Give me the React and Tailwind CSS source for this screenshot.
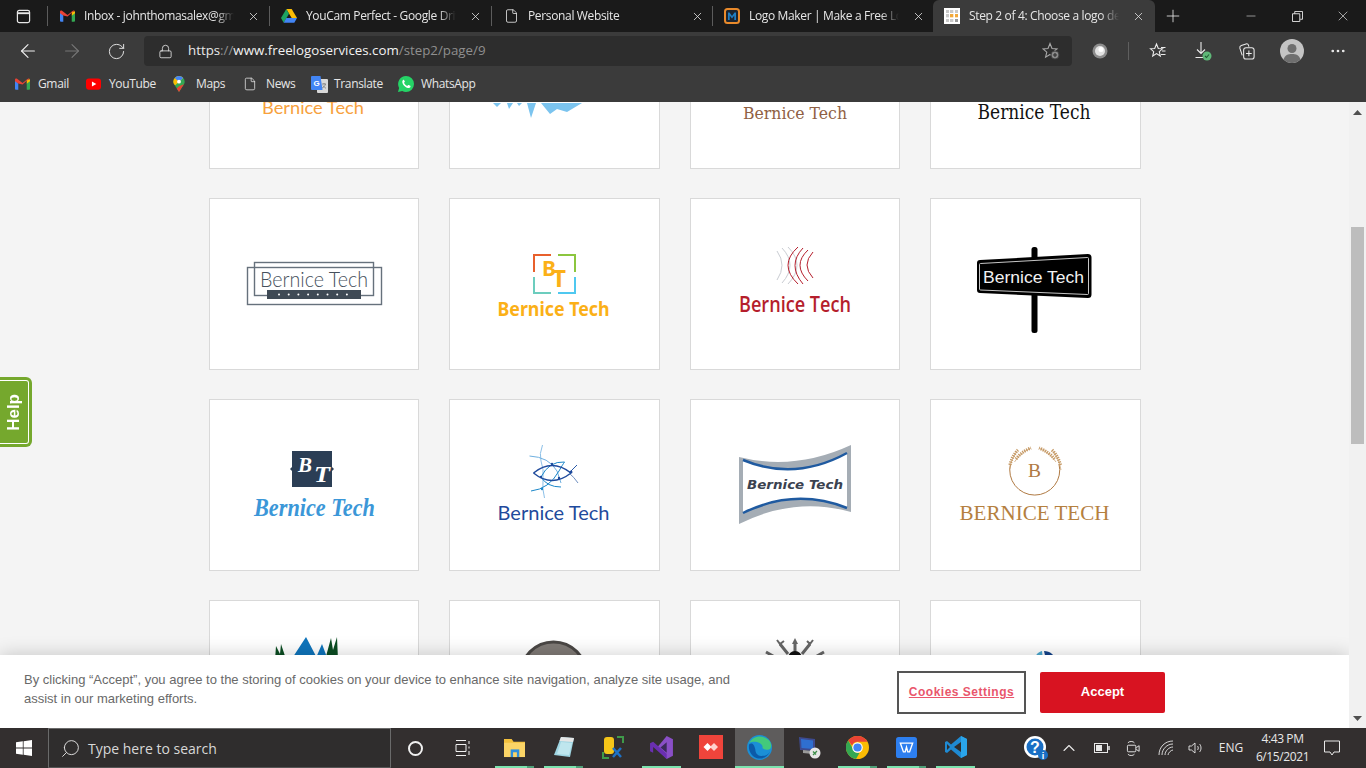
import { ArrowLeft, ArrowRight, RotateCw, Lock, X, Plus, Minus, Search, ChevronUp, MoreHorizontal, File } from 'lucide-react';

const GmailIcon = () => (
  <svg viewBox="0 0 16 12" className="w-[15px] h-[12px]">
    <path d="M0 2v9a1 1 0 0 0 1 1h2.500V5.500z" fill="#4285f4" />
    <path d="M16 2v9a1 1 0 0 1-1 1h-2.500V5.500z" fill="#34a853" />
    <path d="M12.500 1.500 16 .8V3l-3.500 2.600z" fill="#fbbc04" />
    <path d="M3.500 5.500 0 3V1.300C0 .2 1.300-.3 2.200.4L8 4.800 13.800.4c.6-.4 1.200-.4 1.700-.1L12.500 2.600 8 6.500z" fill="#ea4335" />
  </svg>
);

const DriveIcon = () => (
  <svg viewBox="0 0 16 14" className="w-[16px] h-[14px]">
    <path d="M5.300 0h5.400l5.300 9h-5.300z" fill="#fbbc04" />
    <path d="M5.300 0 0 9l2.700 4.800L8 4.700z" fill="#1ea362" />
    <path d="M5.300 9H16l-2.700 4.800H2.700z" fill="#4285f4" />
  </svg>
);

const LogoMakerIcon = () => (
  <svg viewBox="0 0 16 16" className="w-[16px] h-[16px]">
    <rect x="1" y="1" width="14" height="14" rx="2.500" fill="#1b2530" stroke="#e98a2b" strokeWidth="2" />
    <path d="M4 12V4.500h1.500L8 8l2.500-3.500H12V12h-1.700V7.500L8 10.500 5.700 7.500V12z" fill="#1f7fc4" />
  </svg>
);

const GridFavicon = () => {
  const cells = ['#c9c9c9', '#c9c9c9', '#c9c9c9', '#c9c9c9', '#f2a93b', '#f2a93b', '#c9c9c9', '#c9c9c9', '#9a9a9a'];
  return (
    <div className="w-[16px] h-[16px] bg-white grid grid-cols-3 gap-[1px] p-[2px]">
      {cells.map((c, i) => (
        <svg key={i} viewBox="0 0 3 3" className="w-full h-full"><rect width="3" height="3" fill={c} /></svg>
      ))}
    </div>
  );
};

const Tab = ({ icon, title, active, narrow }) => {
  let box = 'w-[221px] h-full flex items-center pl-[11px] shrink-0';
  if (narrow) box = 'w-[220px] h-full flex items-center pl-[11px] shrink-0';
  if (active) box = 'w-[222px] h-full flex items-center pl-[11px] bg-[#3b3b3b] rounded-t-md shrink-0';
  return (
    <div className={box}>
      <div className="w-[16px] h-[16px] flex items-center justify-center shrink-0">{icon}</div>
      <div className="ml-[9px] w-[150px] overflow-hidden whitespace-nowrap text-[12px] tracking-[-0.35px] text-[#e6e6e6] [mask-image:linear-gradient(to_right,black_88%,transparent)]">{title}</div>
      <X className="ml-[13px] w-[13px] h-[13px] text-[#e0e0e0] shrink-0" strokeWidth={1.5} />
    </div>
  );
};

const TabSep = () => <div className="w-px h-[20px] self-center bg-[#5c5c5c] shrink-0" />;

function TabStrip() {
  return (
    <div className="h-[32px] bg-[#1a1a1a] flex items-stretch">
      <div className="w-[47px] flex items-center justify-center shrink-0">
        <svg viewBox="0 0 16 16" className="w-[15px] h-[15px]" fill="none" stroke="#e8e8e8" strokeWidth="1.300">
          <rect x="1.500" y="1.500" width="13" height="13" rx="2" />
          <path d="M1.500 4.500h13" strokeWidth="2" />
        </svg>
      </div>
      <TabSep />
      <Tab icon={<GmailIcon />} title="Inbox - johnthomasalex@gmail.com" />
      <TabSep />
      <Tab icon={<DriveIcon />} title="YouCam Perfect - Google Drive" />
      <TabSep />
      <Tab narrow icon={<File className="w-[15px] h-[16px] text-[#e8e8e8]" strokeWidth={1.3} />} title="Personal Website" />
      <TabSep />
      <Tab narrow icon={<LogoMakerIcon />} title="Logo Maker | Make a Free Logo" />
      <Tab active icon={<GridFavicon />} title="Step 2 of 4: Choose a logo design" />
      <Plus className="ml-[8px] self-center w-[20px] h-[20px] text-[#e8e8e8] shrink-0" strokeWidth={1} />
      <div className="ml-[45px] w-[46px] flex items-center justify-center shrink-0"><Minus className="w-[14px] h-[14px] text-[#e8e8e8]" strokeWidth={1} /></div>
      <div className="w-[46px] flex items-center justify-center shrink-0">
        <svg viewBox="0 0 12 12" className="w-[11px] h-[11px]" fill="none" stroke="#e8e8e8"><path d="M.500 3h8v8.500h-8zM3 3V.500h8.500V9H9" /></svg>
      </div>
      <div className="w-[46px] flex items-center justify-center shrink-0"><X className="w-[16px] h-[16px] text-[#e8e8e8]" strokeWidth={1} /></div>
    </div>
  );
}

const ToolCell = ({ children, className = '' }) => (
  <div className={`w-[44px] h-full flex items-center justify-center shrink-0 ${className}`}>{children}</div>
);

function Toolbar() {
  return (
    <div className="h-[38px] bg-[#3b3b3b] flex items-center pl-[6px]">
      <ToolCell><ArrowLeft className="w-[22px] h-[22px] text-[#f0f0f0]" strokeWidth={1.2} /></ToolCell>
      <ToolCell><ArrowRight className="w-[22px] h-[22px] text-[#777777]" strokeWidth={1.2} /></ToolCell>
      <ToolCell><RotateCw className="w-[19px] h-[19px] text-[#e8e8e8]" strokeWidth={1.2} /></ToolCell>
      <div className="ml-[6px] w-[928px] h-[30px] bg-[#2d2d2d] rounded-[4px] flex items-center pl-[14px] pr-[12px] shrink-0">
        <Lock className="w-[15px] h-[15px] text-[#e8e8e8] shrink-0" strokeWidth={1.3} />
        <div className="ml-[15px] text-[13.3px] whitespace-nowrap text-[#8f8f8f]">
          <span className="text-[#e8e8e8]">https</span>://<span className="text-[#f2f2f2]">www.freelogoservices.com</span>/step2/page/9
        </div>
        <svg viewBox="0 0 18 18" className="ml-auto w-[18px] h-[18px]" fill="none" stroke="#a8a8a8" strokeWidth="1.100">
          <path d="M8 1.500 10 6.500l5 .4-3.800 3.300 1.200 5L8 12.500l-4.400 2.700 1.200-5L1 6.900l5-.4z" />
          <circle cx="13" cy="13" r="4" fill="#8a8a8a" stroke="#3b3b3b" />
          <path d="M13 11v4M11 13h4" stroke="#2d2d2d" />
        </svg>
      </div>
      <ToolCell className="ml-[6px]">
        <svg viewBox="0 0 16 16" className="w-[16px] h-[16px]">
          <circle cx="8" cy="8" r="7.500" fill="#8c8c8c" />
          <circle cx="8" cy="8" r="5" fill="#e2e2e2" />
          <circle cx="9" cy="6.500" r="2.500" fill="#ffffff" />
        </svg>
      </ToolCell>
      <div className="ml-[6px] w-px h-[18px] bg-[#5f5f5f] shrink-0" />
      <ToolCell className="ml-[7px]">
        <svg viewBox="0 0 18 18" className="w-[18px] h-[18px]" fill="none" stroke="#ececec" strokeWidth="1.100">
          <path d="M7.500 2 9.300 6.500l4.200.3-3.200 2.800 1 4.400-3.800-2.400-3.800 2.400 1-4.400L1.500 6.800l4.200-.3z" />
          <path d="M12 5.500h4.500M13 9h3.500M12 12.500h4.500" />
        </svg>
      </ToolCell>
      <ToolCell className="ml-px">
        <svg viewBox="0 0 20 20" className="w-[20px] h-[20px]" fill="none" stroke="#ececec" strokeWidth="1.100">
          <path d="M8 1v11M4 8.500l4 4 4-4M2.500 16.500h9" />
          <circle cx="14" cy="15" r="4.500" fill="#5fb878" stroke="none" />
          <path d="M12 15l1.500 1.500 2.500-3" stroke="#1f5f33" />
        </svg>
      </ToolCell>
      <ToolCell className="-ml-px">
        <svg viewBox="0 0 20 20" className="w-[19px] h-[19px]" fill="none" stroke="#ececec" strokeWidth="1.100">
          <path d="M5.500 14 3 6.500C2.700 5 3.300 4 4.500 3.600L9.500 2c1.300-.3 2.200.2 2.600 1.300L12.500 5" />
          <rect x="7" y="6" width="11" height="12" rx="2.500" />
          <path d="M12.500 9v6M9.500 12h6" />
        </svg>
      </ToolCell>
      <ToolCell className="ml-[2px]">
        <svg viewBox="0 0 24 24" className="w-[24px] h-[24px]">
          <circle cx="12" cy="12" r="12" fill="#c4c4c4" />
          <circle cx="12" cy="9.500" r="4.500" fill="#6f6f6f" />
          <path d="M3.500 20.500C5 16 8 15 12 15s7 1 8.500 5.500A12 12 0 0 1 3.500 20.500z" fill="#6f6f6f" />
        </svg>
      </ToolCell>
      <ToolCell className="ml-[2px]"><MoreHorizontal className="w-[18px] h-[18px] text-[#ececec]" strokeWidth={1.6} /></ToolCell>
    </div>
  );
}

const Bookmark = ({ icon, label, w }) => (
  <div className={`${w} flex items-center shrink-0`}>
    <div className="w-[23px] flex items-center shrink-0">{icon}</div>
    <span className="text-[12px] tracking-[-0.35px] text-[#e6e6e6] whitespace-nowrap">{label}</span>
  </div>
);

function BookmarksBar() {
  return (
    <div className="h-[32px] pb-[4px] bg-[#3b3b3b] flex items-center pl-[15px]">
      <Bookmark w="w-[71px]" label="Gmail" icon={<GmailIcon />} />
      <Bookmark w="w-[87px]" label="YouTube" icon={
        <svg viewBox="0 0 16 12" className="w-[15px] h-[12px]"><rect width="16" height="12" rx="3" fill="#f00" /><path d="M6.300 3.300 11 6 6.300 8.700z" fill="#fff" /></svg>
      } />
      <Bookmark w="w-[70px]" label="Maps" icon={
        <svg viewBox="0 0 12 17" className="w-[12px] h-[16px]">
          <path d="M6 0a6 6 0 0 1 6 6c0 1-.3 2-.8 2.800L6 17 .8 8.800A6 6 0 0 1 0 6a6 6 0 0 1 6-6z" fill="#34a853" />
          <path d="M6 0a6 6 0 0 1 4.500 2L2 9.800.8 8.800A6 6 0 0 1 1.500 2 6 6 0 0 1 6 0z" fill="#fbbc04" />
          <path d="M1.500 2A6 6 0 0 1 6 0a6 6 0 0 1 4.500 2L6 6z" fill="#4285f4" />
          <circle cx="6" cy="6" r="2" fill="#ffffff" />
          <path d="M6 11l5.200-2.200L6 17l-2.400-3.800z" fill="#ea4335" />
        </svg>
      } />
      <Bookmark w="w-[68px]" label="News" icon={<File className="w-[14px] h-[16px] text-[#e8e8e8]" strokeWidth={1.3} />} />
      <Bookmark w="w-[87px]" label="Translate" icon={
        <svg viewBox="0 0 17 17" className="w-[17px] h-[17px]">
          <rect x="6" y="3" width="11" height="14" rx="1" fill="#d8d8d8" />
          <path d="M11 8h4M13 7v1M14.500 8c-.5 2-2 3.500-3.500 4M12 9.500c.8 1.300 2 2.300 3 2.700" stroke="#777" strokeWidth=".8" fill="none" />
          <path d="M1 0h8.500l2 14H1a1 1 0 0 1-1-1V1a1 1 0 0 1 1-1z" fill="#4285f4" />
          <text x="2.500" y="10" fontSize="8" fontWeight="700" fill="#fff" fontFamily="Liberation Sans, sans-serif">G</text>
        </svg>
      } />
      <Bookmark w="w-[90px]" label="WhatsApp" icon={
        <svg viewBox="0 0 16 16" className="w-[16px] h-[16px]">
          <path d="M8 0a8 8 0 0 1 0 16c-1.400 0-2.700-.4-3.800-1L0 16l1.100-4.100A8 8 0 0 1 8 0z" fill="#25d366" />
          <path d="M5.500 3.800c-.5.300-1.300 1.100-1.200 2.300.2 2.600 3 5.500 5.700 6 1.200.1 2.100-.6 2.400-1.200.2-.5.100-1-.1-1.100L10.600 9c-.3-.1-.5 0-.7.200l-.6.800C8 9.600 6.500 8.100 6 6.800l.7-.7c.2-.2.200-.4.100-.7L6 3.900c-.1-.2-.3-.2-.5-.1z" fill="#fff" />
        </svg>
      } />
    </div>
  );
}

const T = ({ x, y, w, size, fill, family, weight = 400, italic, children }) => (
  <text
    x={x}
    y={y}
    textLength={w}
    lengthAdjust="spacingAndGlyphs"
    fontSize={size}
    fill={fill}
    fontFamily={family}
    fontWeight={weight}
    fontStyle={italic ? 'italic' : 'normal'}
  >
    {children}
  </text>
);

const Logo = ({ children }) => (
  <svg viewBox="1 1 208.500 170" className="w-full h-full block">{children}</svg>
);

const LATO = 'Lato, sans-serif';
const OPEN = 'Open Sans, sans-serif';
const NOTO = 'Noto Sans, sans-serif';
const SERIF = 'DejaVu Serif, serif';
const TIMES = 'Liberation Serif, serif';

const FrameLogo = () => (
  <Logo>
    <rect x="38.500" y="69.500" width="134" height="37" fill="none" stroke="#66717c" strokeWidth="1.400" />
    <rect x="45.500" y="64.500" width="119" height="33" fill="none" stroke="#66717c" strokeWidth="1.400" />
    <rect x="58" y="92" width="94" height="9" fill="#3f4a55" />
    {[0, 1, 2, 3, 4, 5, 6, 7].map((i) => (
      <circle key={i} cx={70 + i * 9.700} cy="96.500" r="1" fill="#ffffff" />
    ))}
    <T x="51" y="89" w="108" size="21" fill="#46505c" family={LATO} weight={300}>Bernice Tech</T>
  </Logo>
);

const BracketLogo = () => (
  <Logo>
    <g fill="none" strokeWidth="2">
      <path d="M85 74V57h17" stroke="#e8602c" />
      <path d="M109 57h17v17" stroke="#8cc63f" />
      <path d="M85 79v16h17" stroke="#6ccdbe" />
      <path d="M109 95h17V79" stroke="#4fc8f0" />
    </g>
    <T x="93" y="78" w="14" size="21" fill="#fbb017" family={NOTO} weight={700}>B</T>
    <T x="103" y="89" w="14" size="23" fill="#fbb017" family={NOTO} weight={700}>T</T>
    <T x="48.500" y="118" w="112" size="19" fill="#fbb017" family={NOTO} weight={700}>Bernice Tech</T>
  </Logo>
);

const ArcLogo = () => (
  <Logo>
    <g fill="none" stroke="#c9ccd2" strokeWidth="1">
      <path d="M87 53Q97 67 87 82" />
      <path d="M92 50Q108 67 92 85" />
      <path d="M98 49Q116 67 98 86" />
    </g>
    <g fill="none" stroke="#b51e2c" strokeWidth="1">
      <path d="M108 49Q88 67 108 86" />
      <path d="M113 50Q97 67 113 86" />
      <path d="M118 52Q102 67 118 83" />
      <path d="M123 54Q111 67 123 80" />
    </g>
    <T x="49" y="114" w="112" size="21" fill="#b51e2c" family={OPEN} weight={600}>Bernice Tech</T>
  </Logo>
);

const SignLogo = () => (
  <Logo>
    <rect x="101.500" y="49" width="6" height="86" rx="2.500" fill="#000000" />
    <path d="M50 62 158 56q3.500 0 3.500 3.500V96.500q0 3.500-3.500 3.500L50 95q-3 0-3-3V65q0-3 3-3z" fill="#000000" />
    <path d="M50.500 65.500 157.500 59.500q1 0 1 1V95.500q0 1-1 1L50.500 92q-1 0-1-1V66.500q0-1 1-1z" fill="none" stroke="#dcdcdc" strokeWidth=".9" />
    <T x="53" y="85" w="101" size="17" fill="#f2f2f2" family="Liberation Sans, sans-serif">Bernice Tech</T>
  </Logo>
);

const SquareLogo = () => (
  <Logo>
    <rect x="83" y="52" width="40" height="36" fill="#2b3e55" />
    <path d="M83 68l-2 2 2 2zM123 68l2 2-2 2z" fill="#2b3e55" />
    <T x="89" y="73" w="14" size="22" fill="#ffffff" family={TIMES} weight={700} italic>B</T>
    <T x="105" y="83" w="16" size="23" fill="#ffffff" family={TIMES} weight={700} italic>T</T>
    <T x="45" y="117" w="121" size="25" fill="#3b97d8" family={TIMES} weight={700} italic>Bernice Tech</T>
  </Logo>
);

const FishLogo = () => (
  <Logo>
    <g fill="none" strokeWidth="1">
      <path d="M93.500 46Q90 55 92 62Q95 70 94 80Q93 90 95.500 99" stroke="#8cc0e8" />
      <path d="M80.500 57Q100 58 108 72Q110 78 112 84" stroke="#6fb0e0" />
      <path d="M82 92Q100 90 110 72Q114 65 115.500 63" stroke="#1b87c9" />
      <path d="M115.500 63Q100 62 92 78Q98 88 112 88" stroke="#1b87c9" />
      <path d="M84.500 74Q103 59 122 74" stroke="#1f4a9c" strokeWidth="1.400" />
      <path d="M84.500 74Q103 89 122 74" stroke="#1f4a9c" strokeWidth="1.400" />
      <path d="M120 74L128 66" stroke="#2a5aa8" />
      <path d="M120 74Q125 78 129 84" stroke="#6f8fc0" />
    </g>
    <circle cx="122" cy="73" r="1.500" fill="#1f4a9c" />
    <circle cx="103" cy="65" r="1.200" fill="#1f4a9c" />
    <circle cx="92" cy="78" r="1.200" fill="#1f4a9c" />
    <circle cx="110" cy="79" r="1.200" fill="#1f4a9c" />
    <circle cx="93" cy="90" r="1.200" fill="#1b87c9" />
    <T x="48.500" y="121" w="112" size="19" fill="#1f4a9c" family={LATO}>Bernice Tech</T>
  </Logo>
);

const BannerLogo = () => (
  <Logo>
    <path d="M49 58Q105 72 161 46V113Q105 97 49 125z" fill="#a5adb5" />
    <path d="M53 61Q105 82.500 157 54V109Q105 88.500 53 114z" fill="#ffffff" />
    <path d="M53 61Q105 82.500 157 54" fill="none" stroke="#1f5aa0" strokeWidth="2.500" />
    <path d="M53 114Q105 88.500 157 109" fill="none" stroke="#1f5aa0" strokeWidth="2.500" />
    <T x="57" y="90" w="96" size="13" fill="#3b4250" family="DejaVu Sans, sans-serif" weight={700} italic>Bernice Tech</T>
  </Logo>
);

const WheatLogo = () => (
  <Logo>
    <path d="M80.500 65A25 25 0 1 0 129 65" fill="none" stroke="#b07a43" />
    <g fill="none" stroke="#c69a66">
      <path d="M79.500 71Q81 59 88 51M84.500 63Q90 54 101 49M131 71Q129 59 122 51M126 63Q120 54 109 49" strokeWidth=".7" />
      <path d="M80 66Q82 57 88 51M86 60Q91 53 101 49M130.500 66Q128 57 122 51M124.500 60Q119 53 109 49" strokeWidth="3.200" strokeDasharray="1.300 1" />
    </g>
    <T x="98" y="78" w="13" size="19" fill="#b07a43" family={TIMES}>B</T>
    <T x="29.500" y="121" w="150" size="22" fill="#b5803f" family={TIMES}>BERNICE TECH</T>
  </Logo>
);

const Row1Orange = () => (
  <Logo>
    <T x="53" y="117" w="102" size="18" fill="#f7a13d" family={LATO}>Bernice Tech</T>
  </Logo>
);

const Row1Splash = () => (
  <Logo>
    <g fill="#7bc4ef">
      <path d="M78 106 L82 121 L87 106z" />
      <path d="M92 106 L101 117 L108 112 L118 115 L133 106z" />
      <path d="M44 106 L48 110 L52 106zM58 106 L60 112 L64 106zM68 106 L70 109 L73 106z" />
    </g>
  </Logo>
);

const Row1Brown = () => (
  <Logo>
    <T x="53" y="122" w="104" size="17" fill="#8f6044" family={SERIF}>Bernice Tech</T>
  </Logo>
);

const Row1Black = () => (
  <Logo>
    <T x="47.500" y="122" w="113" size="20" fill="#111111" family={SERIF}>Bernice Tech</T>
  </Logo>
);

const Row4Leaf = () => (
  <Logo>
    <path d="M66 60 67 46 71 54 72 44 76 56 78 60zM116 60 122 38 124 50 128 37 129 60z" fill="#0b4d22" />
    <path d="M82 60 97 37 109 60zM106 60 113 44 119 60z" fill="#0f74bb" />
  </Logo>
);

const Row4Circle = () => (
  <Logo>
    <circle cx="104.500" cy="75" r="33" fill="#7f7a76" stroke="#4a4745" strokeWidth="3" />
  </Logo>
);

const Row4Tools = () => (
  <Logo>
    <g fill="none" stroke="#666666" strokeWidth="3">
      <path d="M105 42V54M90 44 98 54M120 44 112 54M76 52 90 60M134 52 120 60" />
      <path d="M87 40 90 44 94 41M117 41 120 44 123 40" strokeWidth="2" />
    </g>
    <path d="M105 38l-3 6h6z" fill="#666666" />
    <circle cx="105" cy="58" r="7" fill="#111111" />
  </Logo>
);

const Row4Swirl = () => (
  <Logo>
    <path d="M105 60C105 55 108 52 112 51L113 60z" fill="#4aa8d0" />
    <path d="M114 51C120 51 125 55 125 60H116z" fill="#13438a" />
  </Logo>
);

const CARDS = [
  Row1Orange, Row1Splash, Row1Brown, Row1Black,
  FrameLogo, BracketLogo, ArcLogo, SignLogo,
  SquareLogo, FishLogo, BannerLogo, WheatLogo,
  Row4Leaf, Row4Circle, Row4Tools, Row4Swirl,
];

function CookieBanner() {
  return (
    <div className="absolute left-0 bottom-0 w-full h-[73px] bg-white shadow-[0_0_18px_rgba(0,0,0,0.2)] flex items-center pl-[24px]">
      <p className="w-[712px] mb-[6px] text-[13px] leading-[19px] text-[#696969] font-['Liberation_Sans',sans-serif]">
        By clicking “Accept”, you agree to the storing of cookies on your device to enhance site navigation, analyze site usage, and assist in our marketing efforts.
      </p>
      <button className="ml-[161px] mt-[1px] w-[129px] h-[43px] border-2 border-[#555555] text-[12px] font-bold tracking-[0.5px] text-[#e9566c] underline font-['Liberation_Sans',sans-serif]">
        Cookies Settings
      </button>
      <button className="ml-[14px] mt-[1px] w-[125px] h-[41px] bg-[#d81321] rounded-[2px] text-[13px] font-bold text-white font-['Liberation_Sans',sans-serif]">
        Accept
      </button>
    </div>
  );
}

function PageArea() {
  return (
    <div className="h-[626px] flex bg-[#f4f4f4] overflow-hidden">
      <div className="relative w-[1349px] h-full overflow-hidden">
        <div className="ml-[208.75px] -mt-[105px] w-[932px] grid grid-cols-4 gap-x-[30px] gap-y-[29px]">
          {CARDS.map((LogoArt, i) => (
            <div key={i} className="h-[172px] bg-white border border-[#d9d9d9] overflow-hidden">
              <LogoArt />
            </div>
          ))}
        </div>
        <div className="absolute left-0 top-[275px] w-[32px] h-[70px] bg-[#75a82d] rounded-r-md p-[3px] pl-0">
          <div className="w-full h-full border border-l-0 border-white rounded-r-[3px] flex items-center justify-center">
            <span className="[writing-mode:vertical-rl] rotate-180 text-[17px] font-bold text-white font-['Liberation_Sans',sans-serif]">Help</span>
          </div>
        </div>
        <CookieBanner />
      </div>
      <div className="w-[17px] h-full bg-[#f1f1f1] flex flex-col items-center shrink-0">
        <svg viewBox="0 0 9 5" className="w-[9px] h-[5px] mt-[8px] shrink-0"><path d="M4.500 0 9 5H0z" fill="#505050" /></svg>
        <div className="mt-[112px] w-[13px] h-[217px] bg-[#bdbdbd] shrink-0" />
        <svg viewBox="0 0 9 5" className="w-[9px] h-[5px] mt-auto mb-[7px] shrink-0"><path d="M4.500 5 9 0H0z" fill="#505050" /></svg>
      </div>
    </div>
  );
}

const ExplorerIcon = () => (
  <svg viewBox="0 0 24 22" className="w-[23px] h-[21px]">
    <path d="M1 2h8l2 3h12v15H1z" fill="#f3c03c" />
    <path d="M1 6h22v15H1z" fill="#fbd466" />
    <rect x="8" y="13" width="9" height="8" fill="#2f8fdc" />
    <rect x="10.500" y="16" width="4" height="5" fill="#fbd466" />
  </svg>
);
const NotepadIcon = () => (
  <svg viewBox="0 0 24 24" className="w-[24px] h-[24px]">
    <path d="M9 2 22 3 18 22 2 20z" fill="#9fd5e2" />
    <path d="M9 2 22 3 21 7 7.500 6z" fill="#e6e6e6" />
    <path d="M9 7 20 8 17 20 5 19z" fill="#bfe6ee" />
  </svg>
);
const DbToolIcon = () => (
  <svg viewBox="0 0 24 24" className="w-[24px] h-[24px]">
    <rect x="3" y="2" width="10" height="17" rx="3" fill="#f5c518" />
    <path d="M16 2h6v6M2 17v6h6" fill="none" stroke="#3f9a4a" strokeWidth="2" />
    <path d="M12 22l8-9M12 13l8 9" stroke="#1e73c8" strokeWidth="2.500" />
  </svg>
);
const VsIcon = () => (
  <svg viewBox="0 0 24 24" className="w-[25px] h-[25px]">
    <path d="M17 1 23 4V20L17 23 7 13z" fill="#8a4fc7" />
    <path d="M17 7V17L11 12z" fill="#3b2a5c" />
    <path d="M1 8 4 6.500 17 18V23L4 11.500 4 17 1 15.500z" fill="#6a2fb0" />
  </svg>
);
const AnyDeskIcon = () => (
  <svg viewBox="0 0 24 24" className="w-[24px] h-[24px]">
    <rect width="24" height="24" fill="#ef443b" />
    <path d="M8.500 8 12.500 12 8.500 16 4.500 12z" fill="#ffffff" />
    <path d="M15 8 19 12 15 16 11 12z" fill="#ffd1cc" />
  </svg>
);
const EdgeIcon = () => (
  <svg viewBox="0 0 24 24" className="w-[25px] h-[25px]">
    <circle cx="12" cy="12" r="12" fill="#1b8fd6" />
    <path d="M2 8C5 1 15-1 21 5c3 3 3 8 0 9-3 .5-7 0-6-3C14 7 6 5 2 8z" fill="#43c97c" />
    <path d="M8 14c0 4 3 7 7 6 3 0 5-1 7-4-2 5-8 8-13 6C4 20 1 15 2 9c2-2 5-1 6 5z" fill="#0c5aa8" />
  </svg>
);
const MonitorIcon = () => (
  <svg viewBox="0 0 24 24" className="w-[24px] h-[24px]">
    <path d="M2 2 18 4V16L3 15z" fill="#3d4a8f" />
    <path d="M4 4 16 5.500V14L4.500 13z" fill="#2f6fd0" />
    <path d="M6 15 16 16V19L6 18z" fill="#9a9a9a" />
    <circle cx="18" cy="18" r="5.500" fill="#e6e6e6" />
    <path d="M16 20l4-4M16 16.500l3 3" stroke="#3f8f4a" strokeWidth="1.300" />
  </svg>
);
const ChromeIcon = () => (
  <svg viewBox="0 0 24 24" className="w-[23px] h-[23px]">
    <circle cx="12" cy="12" r="12" fill="#fbbc04" />
    <path d="M12 0a12 12 0 0 1 10.400 6H12a6 6 0 0 0-5.700 4L2.300 4.800A12 12 0 0 1 12 0z" fill="#ea4335" />
    <path d="M2.300 4.800 8 14.500A6 6 0 0 0 14 17.700L10.500 23.900A12 12 0 0 1 2.300 4.800z" fill="#34a853" />
    <circle cx="12" cy="12" r="5.500" fill="#ffffff" />
    <circle cx="12" cy="12" r="4.300" fill="#4285f4" />
  </svg>
);
const WpsIcon = () => (
  <svg viewBox="0 0 24 24" className="w-[21px] h-[21px]">
    <rect width="24" height="24" rx="3" fill="#2d7ff0" />
    <path d="M5 7h14l-3.500 10h-2L12 11.500 10.500 17h-2z" fill="none" stroke="#ffffff" strokeWidth="1.600" />
  </svg>
);
const VsCodeIcon = () => (
  <svg viewBox="0 0 24 24" className="w-[24px] h-[24px]">
    <path d="M17 1 23 4V20L17 23 7 14.500 3 18 1 17V7L3 6 7 9.500z" fill="#1f8ad2" />
    <path d="M17 7 10 12 17 17z" fill="#2d2d2d" />
    <path d="M3 9 6 12 3 15z" fill="#2d2d2d" />
    <path d="M17 1 23 4V20L17 23z" fill="#2aa5ea" />
  </svg>
);

const APPS = [
  { Icon: ExplorerIcon, bar: 'stack' },
  { Icon: NotepadIcon, bar: 'stack' },
  { Icon: DbToolIcon },
  { Icon: VsIcon, bar: 'single' },
  { Icon: AnyDeskIcon },
  { Icon: EdgeIcon, bar: 'active' },
  { Icon: MonitorIcon },
  { Icon: ChromeIcon, bar: 'stack' },
  { Icon: WpsIcon, bar: 'stack' },
  { Icon: VsCodeIcon, bar: 'single' },
];

const AppButton = ({ Icon, bar }) => (
  <div className={bar === 'active' ? 'w-[49px] h-full flex flex-col bg-[#5e5c5c]' : 'w-[49px] h-full flex flex-col'}>
    <div className="flex-1 flex items-center justify-center"><Icon /></div>
    {bar === 'active' && <div className="h-[2px] bg-[#7be3ae]" />}
    {bar === 'single' && <div className="h-[2px] mx-[5px] bg-[#7be3ae]" />}
    {bar === 'stack' && (
      <div className="h-[2px] mx-[5px] flex">
        <div className="flex-1 bg-[#7be3ae]" />
        <div className="w-[7px] bg-[#4f9f78]" />
      </div>
    )}
    {!bar && <div className="h-[2px]" />}
  </div>
);

const Tray = ({ w, children }) => <div className={`${w} h-full flex items-center justify-center shrink-0`}>{children}</div>;

function Taskbar() {
  return (
    <div className="h-[40px] bg-[#332f2f] flex items-stretch">
      <div className="w-[48px] flex items-center justify-center shrink-0">
        <svg viewBox="0 0 16 16" className="w-[16px] h-[16px]" fill="#ffffff">
          <path d="M0 2.300 6.800 1.300V7.600H0zM7.600 1.200 16 0V7.600H7.600zM0 8.400H6.800V14.700L0 13.700zM7.600 8.400H16V16L7.600 14.800z" />
        </svg>
      </div>
      <div className="w-[343px] bg-[#2f2d2d] border border-[#6a6a6a] border-b-[#555555] flex items-center pl-[11px] shrink-0">
        <Search className="w-[21px] h-[21px] text-[#e0e0e0] -scale-x-100" strokeWidth={1.1} />
        <span className="ml-[7px] text-[14px] text-[#d8d8d8]">Type here to search</span>
      </div>
      <div className="w-[48px] flex items-center justify-center shrink-0">
        <div className="w-[15px] h-[15px] rounded-full border-2 border-[#f0f0f0]" />
      </div>
      <div className="w-[48px] flex items-center justify-center shrink-0">
        <svg viewBox="0 0 16 16" className="w-[16px] h-[16px]" fill="none" stroke="#f0f0f0">
          <path d="M1 .500h10M1 15.500h10M1 4.500h10v7H1zM14 1v3M14 6.500v2M14 11v4" />
        </svg>
      </div>
      <div className="ml-[3px] flex shrink-0">
        {APPS.map((a, i) => <AppButton key={i} Icon={a.Icon} bar={a.bar} />)}
      </div>
      <div className="ml-[40px] flex items-center text-[#e8e8e8]">
        <Tray w="w-[32px]">
          <svg viewBox="0 0 24 24" className="w-[24px] h-[24px]">
            <circle cx="11" cy="11" r="11" fill="#ffffff" />
            <circle cx="11" cy="11" r="8.500" fill="#1a6fc4" />
            <text x="11" y="17" textAnchor="middle" fontSize="16" fontWeight="700" fill="#ffffff" fontFamily="Liberation Sans, sans-serif">?</text>
            <circle cx="19" cy="19" r="5" fill="#1a6fc4" />
            <text x="19" y="22.500" textAnchor="middle" fontSize="9" fontWeight="700" fill="#ffffff" fontFamily="Liberation Sans, sans-serif">i</text>
          </svg>
        </Tray>
        <Tray w="w-[34px]"><ChevronUp className="w-[20px] h-[20px]" strokeWidth={1.3} /></Tray>
        <Tray w="w-[32px]">
          <svg viewBox="0 0 16 10" className="w-[16px] h-[10px]" fill="none" stroke="#e8e8e8">
            <rect x=".500" y=".500" width="13" height="9" />
            <rect x="2" y="2" width="6" height="6" fill="#e8e8e8" stroke="none" />
            <path d="M15 3v4" strokeWidth="1.500" />
          </svg>
        </Tray>
        <Tray w="w-[30px]">
          <svg viewBox="0 0 16 18" className="w-[15px] h-[17px]" fill="none" stroke="#e8e8e8">
            <path d="M2 3C3 1 8 1 9 3M2 15c1 2 6 2 7 0" />
            <rect x="1.500" y="5.500" width="9" height="7" rx="1" />
            <path d="M11 8l3-2v6l-3-2" />
          </svg>
        </Tray>
        <Tray w="w-[36px]">
          <svg viewBox="0 0 16 16" className="w-[16px] h-[16px]" fill="none" stroke="#e8e8e8" strokeWidth=".9">
            <path d="M1 15C1 7 7 1 15 1M4 15C4 9 9 4 15 4M7 15c0-4 4-8 8-8M10 15c0-2 3-5 5-5" />
          </svg>
        </Tray>
        <Tray w="w-[24px]">
          <svg viewBox="0 0 16 16" className="w-[16px] h-[16px]" fill="none" stroke="#e8e8e8" strokeWidth=".9">
            <path d="M1 6v4h2.500L7 13V3L3.500 6zM9.500 6c1 1 1 3 0 4M11.500 4c2 2 2 6 0 8" />
          </svg>
        </Tray>
        <Tray w="w-[46px]"><span className="text-[12px]">ENG</span></Tray>
        <Tray w="w-[57px]">
          <div className="flex flex-col items-center text-[12px] tracking-[-0.4px] leading-[18px] whitespace-nowrap">
            <span>4:43 PM</span>
            <span>6/15/2021</span>
          </div>
        </Tray>
        <Tray w="w-[41px]">
          <svg viewBox="0 0 16 16" className="w-[16px] h-[16px]" fill="none" stroke="#e8e8e8">
            <path d="M.500 1h15v11H10l-2 3-2-3H.500z" />
          </svg>
        </Tray>
      </div>
    </div>
  );
}

export default function App() {
  return (
    <div className="w-[1366px] h-[768px] overflow-hidden flex flex-col font-['Open_Sans',sans-serif]">
      <TabStrip />
      <Toolbar />
      <BookmarksBar />
      <PageArea />
      <Taskbar />
    </div>
  );
}
